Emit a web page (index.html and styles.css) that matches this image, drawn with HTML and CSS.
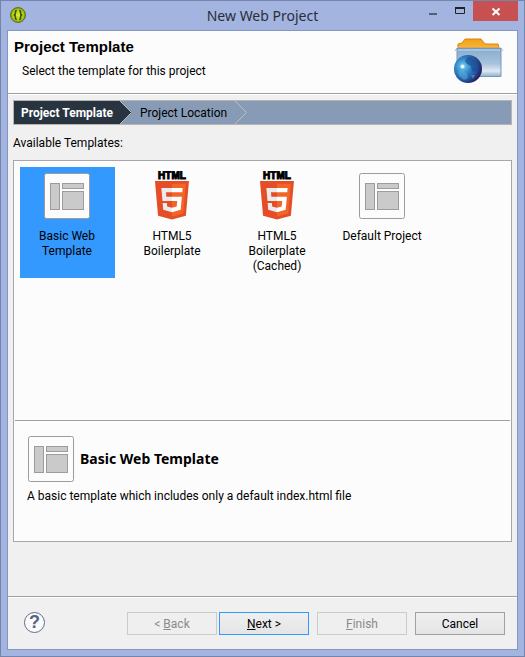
FILE: index.html
```html
<!DOCTYPE html>
<html lang="en">
<head>
<meta charset="utf-8">
<title>New Web Project</title>
<link rel="stylesheet" href="styles.css">
</head>
<body>
<svg class="defs" width="0" height="0" aria-hidden="true">
  <defs>
    <linearGradient id="folder-body" x1="0" y1="0" x2="0" y2="1">
      <stop offset="0" stop-color="#86abd0"/><stop offset=".55" stop-color="#a9c3dc"/><stop offset=".8" stop-color="#dfe9f1"/><stop offset="1" stop-color="#8fb0d0"/>
    </linearGradient>
    <linearGradient id="folder-tab" x1="0" y1="0" x2="0" y2="1">
      <stop offset="0" stop-color="#f0a01c"/><stop offset="1" stop-color="#fbb52c"/>
    </linearGradient>
    <radialGradient id="globe" cx=".32" cy=".4" r=".68">
      <stop offset="0" stop-color="#7fd0ee"/><stop offset=".4" stop-color="#2f86c8"/><stop offset=".75" stop-color="#255299"/><stop offset="1" stop-color="#231e60"/>
    </radialGradient>
    <radialGradient id="app-green" cx=".5" cy=".5" r=".5">
      <stop offset="0" stop-color="#d8ee30"/><stop offset=".8" stop-color="#a5c80c"/><stop offset="1" stop-color="#56700c"/>
    </radialGradient>
    <symbol id="layout-icon" viewBox="0 0 46 46">
      <rect x=".5" y=".5" width="45" height="45" rx="2" fill="#fcfcfc" stroke="#9c9c9c"/>
      <g fill="#cacaca" stroke="#9c9c9c">
        <rect x="6.500" y="10.500" width="9" height="26"/>
        <rect x="18.500" y="10.500" width="21" height="5"/>
        <rect x="18.500" y="18.500" width="21" height="18"/>
      </g>
    </symbol>
    <symbol id="html5-icon" viewBox="0 0 46 50">
      <text class="logo-word" x="23" y="8" text-anchor="middle">HTML</text>
      <g transform="translate(3.700 10) scale(.0754)">
        <path fill="#e44d26" d="M71 460L30 0h451l-41 460-185 52z"/>
        <path fill="#f16529" d="M256 472l149-41 35-394H256z"/>
        <path fill="#ebebeb" d="M256 208h-75l-5-58h80V94H115l1 15 14 156h126zM256 355l-64-17-4-45h-56l7 89 117 32z"/>
        <path fill="#fff" d="M255 208v57h70l-7 73-63 17v59l116-32 16-174zM255 94v56h137l5-56z"/>
      </g>
    </symbol>
  </defs>
</svg>

<div class="window">
  <header class="titlebar">
    <svg class="app-icon" viewBox="0 0 16 16" aria-hidden="true">
      <circle cx="8" cy="8" r="7.500" fill="url(#app-green)" stroke="#66771f"/>
      <path d="M6.800 3.500c-1.600 0-1.300 1.200-1.300 2.500S5.200 7.700 4 8c1.200.3 1.500.7 1.500 2s-.3 2.500 1.300 2.500M9.200 3.500c1.600 0 1.300 1.200 1.300 2.500s.3 1.700 1.500 2c-1.200.3-1.500.7-1.500 2s.3 2.500-1.300 2.500" fill="none" stroke="#3c4c10" stroke-width="1.500"/>
    </svg>
    <h1 class="window-title">New Web Project</h1>
    <div class="window-controls">
      <button class="control" type="button" aria-label="Minimize"><svg viewBox="0 0 27 20"><path d="M10 12h8v2h-8z" fill="#555e75"/></svg></button>
      <button class="control" type="button" aria-label="Maximize"><svg viewBox="0 0 27 20"><path d="M9.500 7.500h9v5h-9z" fill="none" stroke="#222"/><path d="M9 6h10v2H9z" fill="#222"/></svg></button>
      <button class="control close" type="button" aria-label="Close"><svg viewBox="0 0 45 20"><path d="M19.500 7.500l7 6.500M26.500 7.500l-7 6.500" stroke="#fff" stroke-width="2"/></svg></button>
    </div>
  </header>

  <main class="dialog">
    <section class="banner">
      <div>
        <h2 class="banner-title">Project Template</h2>
        <p class="banner-text">Select the template for this project</p>
      </div>
      <svg class="banner-icon" viewBox="0 0 50 46" aria-hidden="true">
        <path d="M4 9V6l4-1 3-4h16l4 5h13l1 4H4z" fill="url(#folder-tab)" stroke="#d98410"/>
        <path d="M1 13l2-3h44l2 3" fill="none" stroke="#aeb9c2"/>
        <path d="M3 10.500h44v28H3z" fill="url(#folder-body)" stroke="#7598bd"/>
        <path d="M4 12h42" stroke="#c5d9e9"/>
        <circle cx="14" cy="31" r="14" fill="url(#globe)"/>
        <path d="M13 20l4-1 3 3 4 2 1 5-4 5-3-1-1-5-4-2-2-3z" fill="#1d4b91" opacity=".65"/>
        <path d="M4 34l4-2 5 3 1 5-4 2-5-4zM17 37l4 0-2 4z" fill="#5ab4e0" opacity=".5"/>
        <circle cx="8.500" cy="28.500" r="2" fill="#d6fafa"/>
      </svg>
    </section>

    <section class="content">
      <nav class="steps" aria-label="Wizard steps">
        <span class="step current" aria-current="step">Project Template</span>
        <svg class="arrow" viewBox="0 0 12 24" preserveAspectRatio="none" aria-hidden="true"><path d="M0 0l12 12L0 24z" fill="#28343f"/><path d="M0 0l11.500 12L0 24" fill="none" stroke="#c1c0b8"/></svg>
        <span class="step">Project Location</span>
        <svg class="arrow" viewBox="0 0 12 24" preserveAspectRatio="none" aria-hidden="true"><path d="M0 0l11.500 12L0 24" fill="none" stroke="#c1c0b8"/></svg>
      </nav>
      <p class="list-label" id="templates-label">Available Templates:</p>
      <div class="panel">
        <div class="templates" role="group" aria-labelledby="templates-label">
          <button class="template selected" type="button" aria-pressed="true"><svg class="template-icon"><use href="#layout-icon"/></svg><span>Basic Web Template</span></button>
          <button class="template" type="button" aria-pressed="false"><svg class="template-icon html5"><use href="#html5-icon"/></svg><span>HTML5 Boilerplate</span></button>
          <button class="template" type="button" aria-pressed="false"><svg class="template-icon html5"><use href="#html5-icon"/></svg><span>HTML5 Boilerplate (Cached)</span></button>
          <button class="template" type="button" aria-pressed="false"><svg class="template-icon"><use href="#layout-icon"/></svg><span>Default Project</span></button>
        </div>
        <div class="details">
          <div class="details-head">
            <svg class="template-icon"><use href="#layout-icon"/></svg>
            <h3 class="details-title">Basic Web Template</h3>
          </div>
          <p class="details-text">A basic template which includes only a default index.html file</p>
        </div>
      </div>
    </section>

    <footer class="footer">
      <button class="help" type="button" aria-label="Help">?</button>
      <div class="actions">
        <div class="pair">
          <button class="action" type="button" disabled>&lt; <u>B</u>ack</button>
          <button class="action primary" type="button"><u>N</u>ext &gt;</button>
        </div>
        <button class="action" type="button" disabled><u>F</u>inish</button>
        <button class="action" type="button">Cancel</button>
      </div>
    </footer>
  </main>
</div>
</body>
</html>
```
FILE: styles.css
```css
* { box-sizing: border-box; }

body {
  margin: 0;
  font: 12px/15px Roboto, "Open Sans", sans-serif;
  color: #000;
}

h1, h2, h3, p { margin: 0; }

button {
  margin: 0;
  padding: 0;
  border: 0;
  background: none;
  font: inherit;
  color: inherit;
}

svg { display: block; }
.defs { position: absolute; }

.window {
  display: flex;
  flex-direction: column;
  min-height: 100vh;
  padding: 0 6px 6px;
  border: 1px solid #7484ad;
  background: #a3b4e0;
}

/* Title bar */
.titlebar {
  display: grid;
  grid-template-columns: 1fr auto 1fr;
  height: 29px;
}
.app-icon { width: 16px; height: 16px; margin: 6px 0 0 3px; }
.window-title {
  align-self: center;
  font: 400 14px/20px "Noto Sans", "Open Sans", sans-serif;
  color: #2a2e38;
}
.window-controls { display: flex; justify-content: flex-end; align-items: flex-start; }
.control { width: 27px; height: 20px; }
.control svg { width: 100%; height: 100%; }
.close { width: 45px; background: #c75050; }

.dialog {
  flex: 1;
  display: flex;
  flex-direction: column;
  border: 1px solid #8496bf;
  background: #f0f0f0;
}

/* Banner */
.banner {
  display: flex;
  justify-content: space-between;
  height: 63px;
  padding: 7px 13px 0 6px;
  border-bottom: 1px solid #a0a0a0;
  background: #fcfcfc;
}
.banner-title { font: bold 15px/18px "Liberation Sans", sans-serif; }
.banner-text { padding: 8px 0 0 8px; }
.banner-icon { width: 50px; height: 46px; }

/* Step trail */
.content {
  flex: 1;
  display: flex;
  flex-direction: column;
  padding: 5px 5px 54px 5px;
  border-top: 1px solid #fff;
}
.steps {
  display: flex;
  height: 25px;
  border: 1px solid #b8b4ae;
  background: #879bb6;
  line-height: 25px;
}
.step { height: 23px; padding: 0 8px; white-space: nowrap; }
.step.current { padding: 0 7px; background: #28343f; color: #fff; font-weight: 700; }
.arrow { width: 12px; height: 23px; }
.list-label { padding: 11px 0 9px; }

/* Template list */
.panel {
  flex: 1;
  display: flex;
  flex-direction: column;
  padding: 0 1px;
  border: 1px solid #a5a7ac;
  background: #fcfcfc;
}
.templates {
  flex: 1;
  display: flex;
  flex-wrap: wrap;
  align-items: flex-start;
  gap: 10px;
  padding: 6px 5px;
}
.template {
  display: flex;
  flex-direction: column;
  align-items: center;
  gap: 10px;
  width: 95px;
  height: 111px;
  padding: 6px 8px 0 7px;
  text-align: center;
}
.template.selected { background: #3399ff; }
.template-icon { flex: none; width: 46px; height: 46px; }
.template-icon.html5 { height: 50px; margin: -2px 0; }
.logo-word { font: 900 10px "Liberation Sans", sans-serif; stroke: #000; }

.details {
  height: 121px;
  padding: 15px 12px 0;
  border-top: 1px solid #a0a0a0;
}
.details-head { display: flex; align-items: center; gap: 6px; padding-left: 1px; }
.details-title { font: 700 14px/20px "Noto Sans", "Open Sans", sans-serif; }
.details-text { padding-top: 7px; }

/* Footer */
.footer {
  display: flex;
  justify-content: space-between;
  align-items: flex-start;
  height: 53px;
  padding: 15px 12px 0 16px;
  border-top: 1px solid #a0a0a0;
  box-shadow: inset 0 1px #fff;
}
.help {
  width: 21px;
  height: 21px;
  border: 1px solid #5d6c8c;
  border-radius: 50%;
  background: #fbfbfb;
  color: #536486;
  font: bold 18px/19px "Liberation Sans", sans-serif;
}
.actions { display: flex; gap: 8px; }
.pair { display: flex; gap: 2px; }
.action {
  width: 90px;
  height: 23px;
  padding-top: 1px;
  border: 1px solid #a0a0a0;
  background: linear-gradient(#efefef, #e5e5e5);
}
.action:disabled { border-color: #cbcbcb; background: #efefef; color: #8a8a8a; }
.action.primary { border-color: #3399ff; }
```
